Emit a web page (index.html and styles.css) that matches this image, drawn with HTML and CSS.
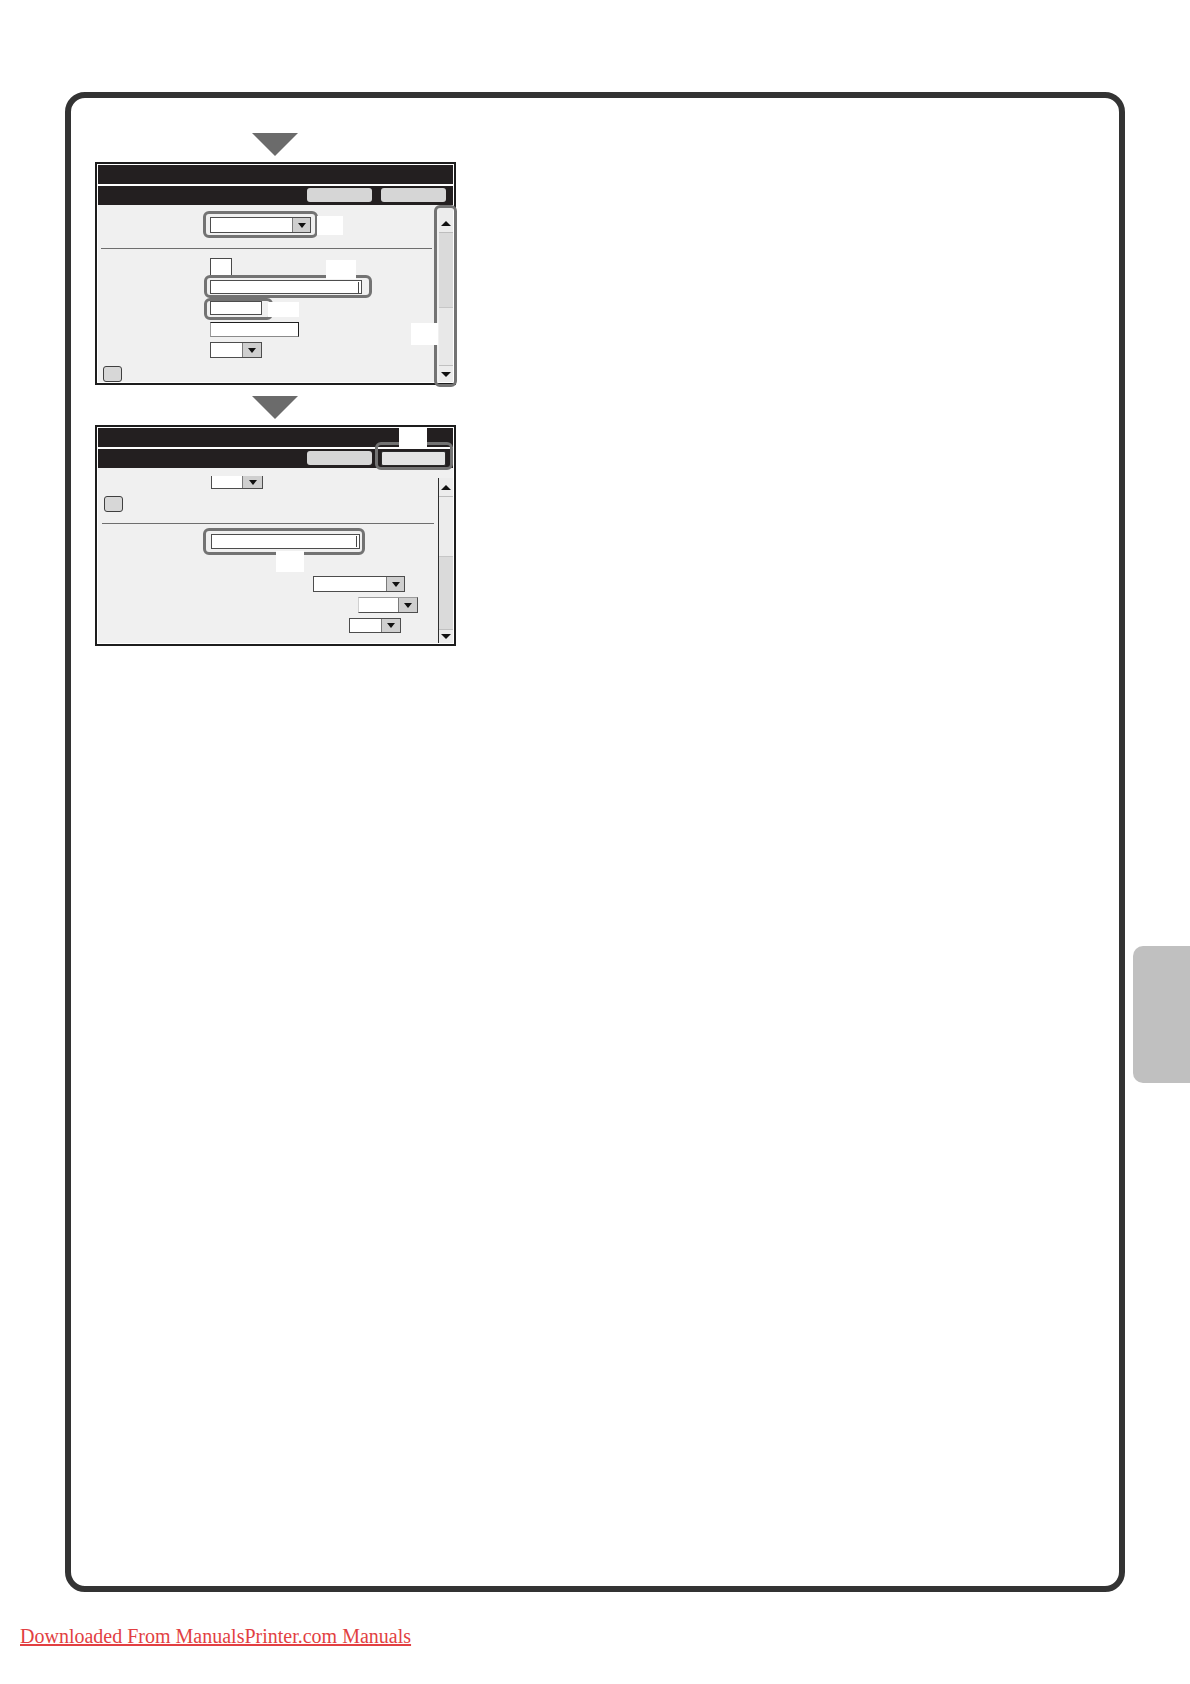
FILE: index.html
```html
<!DOCTYPE html>
<html>
<head>
<meta charset="utf-8">
<title>Manual page</title>
<link rel="stylesheet" href="styles.css">
</head>
<body>
<div class="page">
  <div class="frame">
    <div class="steps">
      <div class="arrow"></div>

      <div class="screen s1">
        <div class="titlebar"></div>
        <div class="toolbar"><span class="tbtn"></span><span class="tbtn"></span></div>
        <div class="body b1">
          <div class="form">
            <div class="hl r1"><div class="dd w101"><span class="arw"></span></div></div>
            <div class="sep sep1"></div>
            <div class="chk"></div>
            <div class="hl r3"><div class="fld w152 h14"><span class="caret"></span></div></div>
            <div class="hl r4"><div class="fld w52 h14"></div></div>
            <div class="fld fld4"></div>
            <div class="dd dd2"><span class="arw a19"></span></div>
            <div class="sqbtn sq1"></div>
          </div>
          <div class="scroll sc1">
            <div class="sb-up"><span class="tri-up"></span></div>
            <div class="sb-thumb t1"></div>
            <div class="sb-track"></div>
            <div class="sb-down d1"><span class="tri-down"></span></div>
          </div>
        </div>
        <div class="hl-over sc-hl"></div>
        <div class="blank bk1"></div>
        <div class="blank bk2"></div>
        <div class="blank bk3"></div>
        <div class="blank bk4"></div>
      </div>

      <div class="arrow a2"></div>

      <div class="screen s2">
        <div class="titlebar"></div>
        <div class="toolbar"><span class="tbtn"></span><span class="tbtn sel"></span></div>
        <div class="body b2">
          <div class="form">
            <div class="dd pdd"><span class="arw a20"></span></div>
            <div class="sqbtn sq2"></div>
            <div class="sep sep2"></div>
            <div class="hl r5"><div class="fld w149 h15"><span class="caret"></span></div></div>
            <div class="dd ddA"><span class="arw"></span></div>
            <div class="dd ddB"><span class="arw a19"></span></div>
            <div class="dd ddC"><span class="arw a19"></span></div>
          </div>
          <div class="scroll sc2">
            <div class="sb-up u2"><span class="tri-up"></span></div>
            <div class="sb-track tr2"></div>
            <div class="sb-thumb t2"></div>
            <div class="sb-down d2"><span class="tri-down"></span></div>
          </div>
        </div>
        <div class="hl-over btn-hl"></div>
        <div class="blank bk5"></div>
        <div class="blank bk6"></div>
      </div>
    </div>
  </div>
  <div class="tab"></div>
  <div class="footer"><a class="dl">Downloaded From ManualsPrinter.com Manuals</a></div>
</div>
</body>
</html>
```

FILE: styles.css
```css
html, body {
  margin: 0;
  padding: 0;
  background: #ffffff;
}

.page {
  position: relative;
  width: 1190px;
  height: 1684px;
  overflow: hidden;
  font-family: "Liberation Serif", "Times New Roman", serif;
}

.frame {
  margin: 92px 0 0 65px;
  width: 1060px;
  height: 1500px;
  box-sizing: border-box;
  border: 6px solid #333333;
  border-radius: 20px;
  padding: 35px 0 0 24px;
}

.steps {
  width: 362px;
  display: flex;
  flex-direction: column;
}

.arrow {
  margin-left: 157px;
  width: 0;
  height: 0;
  border-left: 23px solid transparent;
  border-right: 23px solid transparent;
  border-top: 23px solid #6b6b6b;
}
.arrow.a2 { margin-top: 11px; }

.screen {
  position: relative;
  margin-top: 6px;
  width: 361px;
  box-sizing: border-box;
  border: 2px solid #1d1d1d;
  padding: 1px;
  background: #ffffff;
}

.titlebar {
  height: 19px;
  background: #231f20;
}

.toolbar {
  margin-top: 2px;
  height: 19px;
  box-sizing: border-box;
  background: #231f20;
  display: flex;
  justify-content: flex-end;
  align-items: flex-start;
  gap: 9px;
  padding: 2px 7px 0 0;
}

.tbtn {
  width: 65px;
  height: 14px;
  border-radius: 3px;
  background: #d6d6d6;
  box-sizing: border-box;
}
.tbtn.sel {
  height: 15px;
  background: #e4e4e4;
  border: 1px solid #2a2a2a;
  border-radius: 2px;
}

.body {
  display: flex;
  background: #f0f0f0;
}
.b1 { height: 177px; }
.b2 { height: 175px; }

.form {
  flex: 1;
  display: flex;
  flex-direction: column;
  align-items: flex-start;
}

/* highlight callout box wrapping a field */
.hl {
  display: flex;
  border: 3px solid #737373;
  border-radius: 6px;
}
.r1 { margin: 6px 0 0 105px; padding: 3px 4px 2px 4px; }
.r3 { margin: 0 0 0 106px; padding: 2px 7px 1px 3px; }
.r4 { margin: 0 0 0 106px; padding: 0 8px 2px 3px; }
.r5 { margin: 4px 0 0 105px; padding: 3px 2px 3px 5px; }

.sep {
  height: 1px;
  background: #6e6e6e;
  align-self: stretch;
}
.sep1 { margin: 10px 7px 0 3px; }
.sep2 { margin: 11px 4px 0 4px; }

.chk {
  margin: 9px 0 0 112px;
  width: 22px;
  height: 17px;
  box-sizing: border-box;
  border: 1px solid #4a4a4a;
  border-bottom: 0;
  background: #ffffff;
}

.fld {
  box-sizing: border-box;
  border: 1px solid #4d4d4d;
  background: #ffffff;
  display: flex;
  justify-content: flex-end;
  align-items: center;
}
.w152 { width: 152px; }
.w149 { width: 149px; }
.w52 { width: 52px; }
.h14 { height: 14px; }
.h15 { height: 15px; }

.caret {
  width: 1px;
  height: 11px;
  margin-right: 2px;
  background: #444444;
}

.fld4 {
  margin: 2px 0 0 112px;
  width: 89px;
  height: 15px;
  border-top-color: #1e1e1e;
  border-right-color: #1e1e1e;
  border-left-color: #9a9a9a;
  border-bottom-color: #8a8a8a;
}

.dd {
  display: flex;
  height: 16px;
  box-sizing: border-box;
  border: 1px solid #4d4d4d;
  background: #ffffff;
}
.w101 { width: 101px; }
.dd2 { margin: 5px 0 0 112px; width: 52px; }

.arw {
  margin-left: auto;
  width: 18px;
  height: 100%;
  box-sizing: border-box;
  background: #cfcfcf;
  border-left: 1px solid #7a7a7a;
  display: flex;
  align-items: center;
  justify-content: center;
}
.arw::after {
  content: "";
  width: 0;
  height: 0;
  border-left: 4px solid transparent;
  border-right: 4px solid transparent;
  border-top: 5px solid #111111;
}
.arw.a19 { width: 19px; }
.arw.a20 { width: 20px; }

.sqbtn {
  width: 19px;
  height: 16px;
  box-sizing: border-box;
  border: 1px solid #3f3f3f;
  border-radius: 3px;
  background: #d7d7d7;
}
.sq1 { margin: 8px 0 0 5px; }
.sq2 { margin: 7px 0 0 6px; }

/* screen 2 form items */
.pdd {
  margin: 8px 0 0 113px;
  width: 52px;
  height: 13px;
  border-top: 0;
}
.ddA { margin: 21px 0 0 215px; width: 92px; }
.ddB { margin: 5px 0 0 260px; width: 60px; border-left-color: #d0d0d0; border-top-color: #9a9a9a; }
.ddC { margin: 5px 0 0 251px; width: 52px; height: 15px; }

/* scrollbars */
.scroll {
  display: flex;
  flex-direction: column;
  background: #e9e9e9;
  box-sizing: border-box;
}
.sc1 { width: 14px; }
.sc2 { width: 15px; margin-top: 10px; border-left: 1px solid #2e2e2e; }

.sb-up {
  height: 28px;
  box-sizing: border-box;
  padding-top: 16px;
  display: flex;
  justify-content: center;
  align-items: flex-start;
  background: #ececec;
  border-bottom: 1px solid #bdbdbd;
}
.sb-up.u2 {
  height: 19px;
  padding-top: 7px;
}
.sb-thumb {
  background: #dadada;
  border-bottom: 1px solid #c6c6c6;
}
.t1 { height: 74px; }
.t2 { height: 73px; border-top: 1px solid #c6c6c6; border-bottom: 0; box-sizing: border-box; }
.sb-track {
  flex: 1;
  background: #e8e8e8;
}
.tr2 { flex: none; height: 59px; background: #ececec; }
.sb-down {
  box-sizing: border-box;
  display: flex;
  justify-content: center;
  align-items: center;
  background: #ececec;
  border-top: 1px solid #c0c0c0;
}
.d1 { height: 17px; }
.d2 { flex: 1; }

.tri-up {
  width: 0;
  height: 0;
  border-left: 5px solid transparent;
  border-right: 5px solid transparent;
  border-bottom: 5px solid #111111;
}
.tri-down {
  width: 0;
  height: 0;
  border-left: 5px solid transparent;
  border-right: 5px solid transparent;
  border-top: 5px solid #111111;
}

/* callout overlays */
.hl-over {
  position: absolute;
  box-sizing: border-box;
  border: 3px solid #737373;
  border-radius: 6px;
}
.sc-hl { left: 337px; top: 41px; width: 23px; height: 182px; }
.btn-hl { left: 278px; top: 15px; width: 78px; height: 28px; }

/* blanked label areas */
.blank {
  position: absolute;
  background: #ffffff;
}
.bk1 { left: 220px; top: 52px; width: 26px; height: 19px; }
.bk2 { left: 229px; top: 96px; width: 30px; height: 19px; }
.bk3 { left: 171px; top: 138px; width: 31px; height: 15px; }
.bk4 { left: 314px; top: 159px; width: 27px; height: 22px; }
.bk5 { left: 302px; top: 0; width: 28px; height: 20px; }
.bk6 { left: 179px; top: 124px; width: 28px; height: 21px; }

/* side thumb tab */
.tab {
  position: absolute;
  left: 1133px;
  top: 946px;
  width: 57px;
  height: 137px;
  background: #c0c0c0;
  border-radius: 10px 0 0 10px;
}

.footer {
  margin: 33px 0 0 20px;
  font-size: 20px;
  line-height: 23px;
}
.dl {
  color: #e23f42;
  text-decoration: underline;
}
```
